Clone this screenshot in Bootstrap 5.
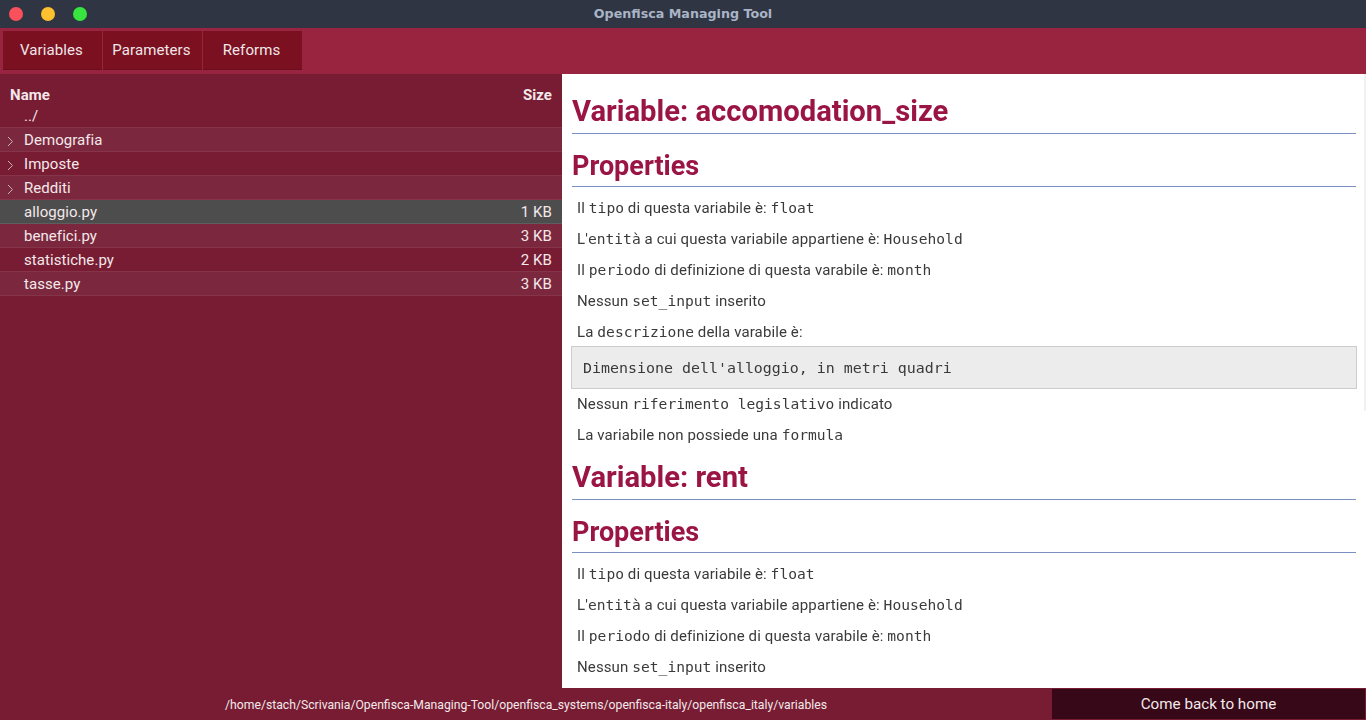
<!DOCTYPE html>
<html lang="en">

<head>
    <meta charset="UTF-8">
    <meta name="viewport" content="width=device-width, initial-scale=1">
    <link href="https://cdn.jsdelivr.net/npm/bootstrap@5.3.3/dist/css/bootstrap.min.css" rel="stylesheet">
    <script src="https://cdn.jsdelivr.net/npm/bootstrap@5.3.3/dist/js/bootstrap.bundle.min.js"></script>
    <title>Openfisca Managing Tool</title>
    <style>
        html, body { height: 720px; overflow: hidden; }
        body { font-family: Roboto, "Liberation Sans", sans-serif; font-size: 15px; background: #771c33; }
        .app-shell { width: 1366px; height: 720px; }

        /* title bar */
        .title-bar { height: 28px; background: #2f3542; }
        .win-dots { left: 9px; top: 7px; gap: 18px; }
        .win-dot { width: 14px; height: 14px; border-radius: 50%; }
        .win-title { font-family: "DejaVu Sans", sans-serif; font-size: 12.7px; font-weight: 700; color: #a9b4c6; }

        /* tabs */
        .tab-strip { height: 46px; background: #98243f; padding: 3px 0 0 3px; gap: 1px; }
        .tab-btn { width: 99px; height: 39px; padding: 0 2px 0 0; border: 0; border-radius: 0; background: #7a1020; color: #f1e6e8; font-size: 15px; letter-spacing: .1px; box-shadow: inset 0 -1px 0 #6a0f1e; }

        /* file tree */
        .tree-pane { width: 562px; background: #771c33; color: #f3e8ea; padding-top: 14px; letter-spacing: .06px; }
        .tree-head { height: 16px; line-height: 14px; padding: 0 10px; font-weight: 700; }
        .tree-row { height: 24px; line-height: 25px; padding: 0 10px 0 24px; border-bottom: 1px solid #86344a; }
        .tree-row.first-row { height: 21px; line-height: 19px; margin-top: 3px; }
        .tree-row.alt-row { background: #7b283f; }
        .tree-row.sel-row { background: #4d4d4d; border-bottom-color: #5e5e5e; }
        .tree-arrow { left: 7px; top: 8px; width: 7px; height: 11px; }

        /* document */
        .doc-pane { width: 804px; background: #fff; padding: 0 10px; color: #3a3a3a; }
        .doc-pane h1 { color: #9b1544; font-size: 29.2px; font-weight: 700; line-height: 33px; margin: 0; padding-bottom: 5px; border-bottom: 1px solid #7a90c0; }
        .doc-pane h2 { color: #9b1544; font-size: 27px; font-weight: 700; line-height: 32px; margin: 16px 0 0; padding-bottom: 4px; border-bottom: 1px solid #7a90c0; }
        .doc-title { padding-top: 21px; }
        .doc-title.later-title { padding-top: 10px; }
        .doc-pane p { margin: 0 0 0 5px; height: 31px; line-height: 20px; padding-top: 5px; letter-spacing: .12px; }
        .prop-list p { padding-top: 7px; }
        .doc-pane code { font-family: "DejaVu Sans Mono", monospace; font-size: 14.6px; color: #3a3a3a; letter-spacing: 0; }
        .doc-pane pre { margin: 0 -1px; height: 43px; background: #ececec; border: 1px solid #ccc; padding: 0 11px; line-height: 43px; font-family: "DejaVu Sans Mono", monospace; font-size: 14.95px; color: #3a3a3a; }
        .doc-scroll { right: 0; top: 0; width: 2px; height: 337px; background: #f1f1f1; }

        /* footer */
        .status-bar { height: 32px; background: #771c33; color: #f3e8ea; }
        .status-path { width: 1052px; font-size: 12.2px; padding-top: 2px; }
        .home-btn { width: 313px; height: 30px; padding: 0; border: 0; border-radius: 0; background: #360818; color: #f3e8ea; font-size: 15.2px; }
    </style>
</head>

<body>
    <div class="app-shell d-flex flex-column">
        <!-- Window title bar -->
        <div class="title-bar position-relative d-flex align-items-center justify-content-center flex-shrink-0">
            <div class="win-dots position-absolute d-flex">
                <span class="win-dot" style="background:#f9515c"></span>
                <span class="win-dot" style="background:#fdc02f"></span>
                <span class="win-dot" style="background:#36e63f"></span>
            </div>
            <span class="win-title">Openfisca Managing Tool</span>
        </div>

        <!-- Tabs -->
        <div class="tab-strip d-flex flex-shrink-0">
            <button class="btn tab-btn" type="button">Variables</button>
            <button class="btn tab-btn" type="button">Parameters</button>
            <button class="btn tab-btn" type="button">Reforms</button>
        </div>

        <div class="d-flex flex-grow-1 overflow-hidden">
            <!-- File tree -->
            <div class="tree-pane flex-shrink-0">
                <div class="tree-head d-flex justify-content-between"><span>Name</span><span>Size</span></div>
                <div class="tree-row first-row">../</div>
                <div class="tree-row alt-row position-relative"><svg class="tree-arrow position-absolute" viewBox="0 0 7 11"><path d="M1 1l4.500 4.500L1 10" fill="none" stroke="#c4b2b7" stroke-width="1"/></svg>Demografia</div>
                <div class="tree-row position-relative"><svg class="tree-arrow position-absolute" viewBox="0 0 7 11"><path d="M1 1l4.500 4.500L1 10" fill="none" stroke="#c4b2b7" stroke-width="1"/></svg>Imposte</div>
                <div class="tree-row alt-row position-relative"><svg class="tree-arrow position-absolute" viewBox="0 0 7 11"><path d="M1 1l4.500 4.500L1 10" fill="none" stroke="#c4b2b7" stroke-width="1"/></svg>Redditi</div>
                <div class="tree-row sel-row d-flex justify-content-between"><span>alloggio.py</span><span>1 KB</span></div>
                <div class="tree-row alt-row d-flex justify-content-between"><span>benefici.py</span><span>3 KB</span></div>
                <div class="tree-row d-flex justify-content-between"><span>statistiche.py</span><span>2 KB</span></div>
                <div class="tree-row alt-row d-flex justify-content-between"><span>tasse.py</span><span>3 KB</span></div>
            </div>

            <!-- Document -->
            <div class="doc-pane position-relative overflow-hidden flex-grow-1">
                <div class="doc-scroll position-absolute"></div>
                <div class="doc-title"><h1>Variable: accomodation_size</h1></div>
                <h2>Properties</h2>
                <div class="prop-list mt-1">
                    <p>Il <code>tipo</code> di questa variabile è: <code>float</code></p>
                    <p>L'<code>entità</code> a cui questa variabile appartiene è: <code>Household</code></p>
                    <p>Il <code>periodo</code> di definizione di questa varabile è: <code>month</code></p>
                    <p>Nessun <code>set_input</code> inserito</p>
                    <p>La <code>descrizione</code> della varabile è:</p>
                </div>
                <pre>Dimensione dell'alloggio, in metri quadri</pre>
                <p>Nessun <code>riferimento legislativo</code> indicato</p>
                <p>La variabile non possiede una <code>formula</code></p>

                <div class="doc-title later-title"><h1>Variable: rent</h1></div>
                <h2>Properties</h2>
                <div class="prop-list mt-1">
                    <p>Il <code>tipo</code> di questa variabile è: <code>float</code></p>
                    <p>L'<code>entità</code> a cui questa variabile appartiene è: <code>Household</code></p>
                    <p>Il <code>periodo</code> di definizione di questa varabile è: <code>month</code></p>
                    <p>Nessun <code>set_input</code> inserito</p>
                </div>
            </div>
        </div>

        <!-- Status bar -->
        <div class="status-bar d-flex align-items-center flex-shrink-0">
            <div class="status-path text-center">/home/stach/Scrivania/Openfisca-Managing-Tool/openfisca_systems/openfisca-italy/openfisca_italy/variables</div>
            <button class="btn home-btn" type="button">Come back to home</button>
        </div>
    </div>
</body>

</html>
